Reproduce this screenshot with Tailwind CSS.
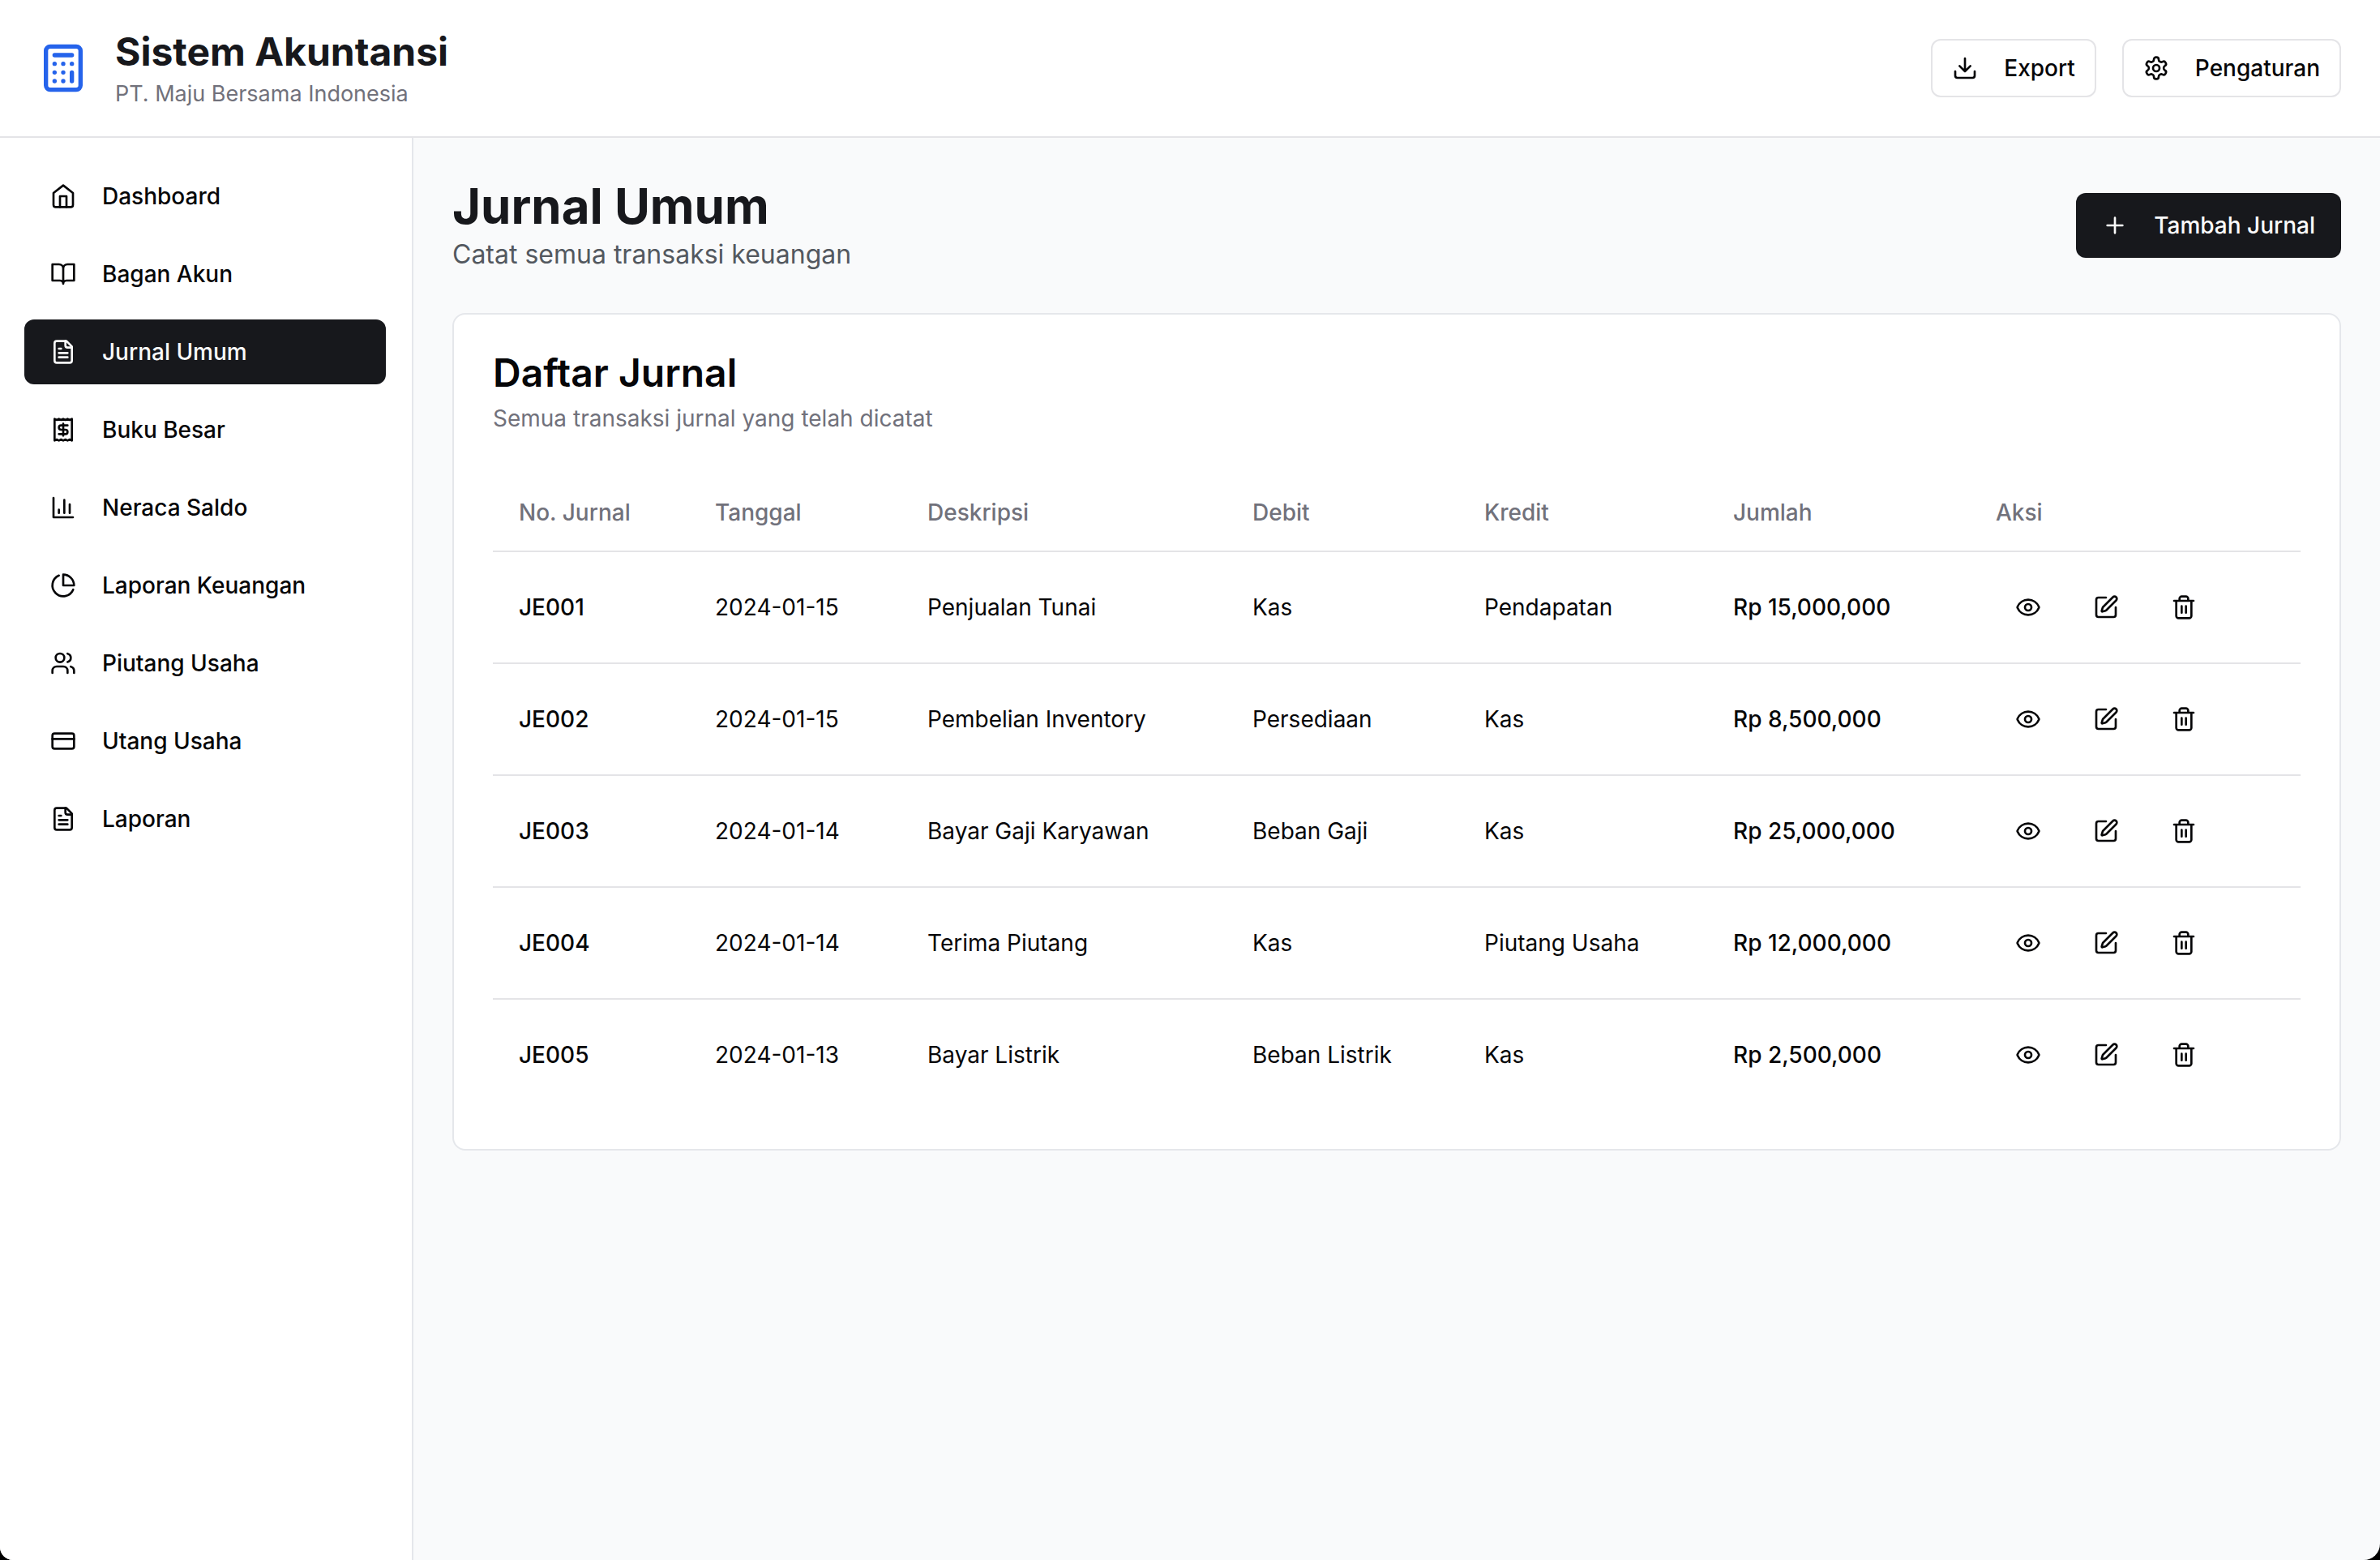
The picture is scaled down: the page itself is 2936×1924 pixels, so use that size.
<!DOCTYPE html>
<html lang="id">
<head>
    <meta charset="UTF-8">
    <meta name="viewport" content="width=device-width, initial-scale=1.0">
    <title>Jurnal Umum - Sistem Akuntansi</title>
    <script src="https://cdn.jsdelivr.net/npm/@tailwindcss/browser@4"></script>
</head>
<body class="bg-black font-[Inter,sans-serif] text-[28px] leading-10 text-[#060608]">
    <!-- Icons -->
    <svg class="hidden">
        <symbol id="calculator" viewBox="0 0 24 24"><rect width="16" height="20" x="4" y="2" rx="2"/><path d="M8 6h8M16 14v4M16 10h.01M12 10h.01M8 10h.01M12 14h.01M8 14h.01M12 18h.01M8 18h.01"/></symbol>
        <symbol id="download" viewBox="0 0 24 24"><path d="M21 15v4a2 2 0 0 1-2 2H5a2 2 0 0 1-2-2v-4M7 10l5 5 5-5M12 15V3"/></symbol>
        <symbol id="settings" viewBox="0 0 24 24"><path d="M12.22 2h-.44a2 2 0 0 0-2 2v.18a2 2 0 0 1-1 1.73l-.43.25a2 2 0 0 1-2 0l-.15-.08a2 2 0 0 0-2.73.73l-.22.38a2 2 0 0 0 .73 2.73l.15.1a2 2 0 0 1 1 1.72v.51a2 2 0 0 1-1 1.74l-.15.09a2 2 0 0 0-.73 2.73l.22.38a2 2 0 0 0 2.73.73l.15-.08a2 2 0 0 1 2 0l.43.25a2 2 0 0 1 1 1.73V20a2 2 0 0 0 2 2h.44a2 2 0 0 0 2-2v-.18a2 2 0 0 1 1-1.73l.43-.25a2 2 0 0 1 2 0l.15.08a2 2 0 0 0 2.73-.73l.22-.39a2 2 0 0 0-.73-2.73l-.15-.08a2 2 0 0 1-1-1.74v-.5a2 2 0 0 1 1-1.74l.15-.09a2 2 0 0 0 .73-2.73l-.22-.38a2 2 0 0 0-2.73-.73l-.15.08a2 2 0 0 1-2 0l-.43-.25a2 2 0 0 1-1-1.73V4a2 2 0 0 0-2-2z"/><circle cx="12" cy="12" r="3"/></symbol>
        <symbol id="home" viewBox="0 0 24 24"><path d="m3 9 9-7 9 7v11a2 2 0 0 1-2 2H5a2 2 0 0 1-2-2z"/><path d="M9 22V12h6v10"/></symbol>
        <symbol id="book-open" viewBox="0 0 24 24"><path d="M2 3h6a4 4 0 0 1 4 4v14a3 3 0 0 0-3-3H2zM22 3h-6a4 4 0 0 0-4 4v14a3 3 0 0 1 3-3h7z"/></symbol>
        <symbol id="file-text" viewBox="0 0 24 24"><path d="M15 2H6a2 2 0 0 0-2 2v16a2 2 0 0 0 2 2h12a2 2 0 0 0 2-2V7Z"/><path d="M14 2v4a2 2 0 0 0 2 2h4M10 9H8M16 13H8M16 17H8"/></symbol>
        <symbol id="receipt" viewBox="0 0 24 24"><path d="M4 2v20l2-1 2 1 2-1 2 1 2-1 2 1 2-1 2 1V2l-2 1-2-1-2 1-2-1-2 1-2-1-2 1Z"/><path d="M16 8h-6a2 2 0 1 0 0 4h4a2 2 0 1 1 0 4H8M12 17.5v-11"/></symbol>
        <symbol id="bar-chart" viewBox="0 0 24 24"><path d="M3 3v18h18M18 17V9M13 17V5M8 17v-3"/></symbol>
        <symbol id="pie-chart" viewBox="0 0 24 24"><path d="M21.21 15.89A10 10 0 1 1 8 2.83"/><path d="M22 12A10 10 0 0 0 12 2v10z"/></symbol>
        <symbol id="users" viewBox="0 0 24 24"><path d="M16 21v-2a4 4 0 0 0-4-4H6a4 4 0 0 0-4 4v2"/><circle cx="9" cy="7" r="4"/><path d="M22 21v-2a4 4 0 0 0-3-3.87M16 3.13a4 4 0 0 1 0 7.75"/></symbol>
        <symbol id="credit-card" viewBox="0 0 24 24"><rect width="20" height="14" x="2" y="5" rx="2"/><path d="M2 10h20"/></symbol>
        <symbol id="plus" viewBox="0 0 24 24"><path d="M5 12h14M12 5v14"/></symbol>
        <symbol id="eye" viewBox="0 0 24 24"><path d="M2.062 12.348a1 1 0 0 1 0-.696 10.75 10.75 0 0 1 19.876 0 1 1 0 0 1 0 .696 10.75 10.75 0 0 1-19.876 0"/><circle cx="12" cy="12" r="3"/></symbol>
        <symbol id="edit" viewBox="0 0 24 24"><path d="M12 3H5a2 2 0 0 0-2 2v14a2 2 0 0 0 2 2h14a2 2 0 0 0 2-2v-7"/><path d="M18.375 2.625a1 1 0 0 1 3 3l-9.013 9.014a2 2 0 0 1-.853.505l-2.873.84a.5.5 0 0 1-.62-.62l.84-2.873a2 2 0 0 1 .506-.852z"/></symbol>
        <symbol id="trash" viewBox="0 0 24 24"><path d="M3 6h18M19 6v14c0 1-1 2-2 2H7c-1 0-2-1-2-2V6M8 6V4c0-1 1-2 2-2h4c1 0 2 1 2 2v2M10 11v6M14 11v6"/></symbol>
    </svg>

    <div class="flex min-h-screen flex-col overflow-hidden rounded-bl-[16px] rounded-br-[20px] bg-gray-50">
        <!-- Header -->
        <header class="flex items-center justify-between border-b-2 border-zinc-200 bg-white py-8 pr-12 pl-[46px]">
            <div class="flex items-center gap-8">
                <svg class="size-16 fill-none stroke-[#2563eb] stroke-2 [stroke-linecap:round] [stroke-linejoin:round]"><use href="#calculator"/></svg>
                <div>
                    <h1 class="text-[48px] leading-16 font-bold text-[#17181c]">Sistem Akuntansi</h1>
                    <p class="text-[27px] text-zinc-500">PT. Maju Bersama Indonesia</p>
                </div>
            </div>
            <div class="flex items-center gap-8 font-medium">
                <button class="flex h-18 items-center gap-8 rounded-xl border-2 border-zinc-200 bg-white px-6">
                    <svg class="size-8 fill-none stroke-current stroke-2 [stroke-linecap:round] [stroke-linejoin:round]"><use href="#download"/></svg>
                    Export
                </button>
                <button class="flex h-18 items-center gap-8 rounded-xl border-2 border-zinc-200 bg-white px-6">
                    <svg class="size-8 fill-none stroke-current stroke-2 [stroke-linecap:round] [stroke-linejoin:round]"><use href="#settings"/></svg>
                    Pengaturan
                </button>
            </div>
        </header>

        <div class="flex grow">
            <!-- Sidebar -->
            <aside class="w-[510px] shrink-0 border-r-2 border-gray-200 bg-white py-8 pr-8 pl-[30px]">
                <nav class="flex flex-col gap-4 font-medium">
                    <a href="#" class="flex h-20 items-center gap-8 rounded-xl px-8">
                        <svg class="size-8 fill-none stroke-current stroke-2 [stroke-linecap:round] [stroke-linejoin:round]"><use href="#home"/></svg>
                        Dashboard
                    </a>
                    <a href="#" class="flex h-20 items-center gap-8 rounded-xl px-8">
                        <svg class="size-8 fill-none stroke-current stroke-2 [stroke-linecap:round] [stroke-linejoin:round]"><use href="#book-open"/></svg>
                        Bagan Akun
                    </a>
                    <a href="#" aria-current="page" class="flex h-20 items-center gap-8 rounded-xl bg-[#17181c] px-8 text-zinc-50">
                        <svg class="size-8 fill-none stroke-current stroke-2 [stroke-linecap:round] [stroke-linejoin:round]"><use href="#file-text"/></svg>
                        Jurnal Umum
                    </a>
                    <a href="#" class="flex h-20 items-center gap-8 rounded-xl px-8">
                        <svg class="size-8 fill-none stroke-current stroke-2 [stroke-linecap:round] [stroke-linejoin:round]"><use href="#receipt"/></svg>
                        Buku Besar
                    </a>
                    <a href="#" class="flex h-20 items-center gap-8 rounded-xl px-8">
                        <svg class="size-8 fill-none stroke-current stroke-2 [stroke-linecap:round] [stroke-linejoin:round]"><use href="#bar-chart"/></svg>
                        Neraca Saldo
                    </a>
                    <a href="#" class="flex h-20 items-center gap-8 rounded-xl px-8">
                        <svg class="size-8 fill-none stroke-current stroke-2 [stroke-linecap:round] [stroke-linejoin:round]"><use href="#pie-chart"/></svg>
                        Laporan Keuangan
                    </a>
                    <a href="#" class="flex h-20 items-center gap-8 rounded-xl px-8">
                        <svg class="size-8 fill-none stroke-current stroke-2 [stroke-linecap:round] [stroke-linejoin:round]"><use href="#users"/></svg>
                        Piutang Usaha
                    </a>
                    <a href="#" class="flex h-20 items-center gap-8 rounded-xl px-8">
                        <svg class="size-8 fill-none stroke-current stroke-2 [stroke-linecap:round] [stroke-linejoin:round]"><use href="#credit-card"/></svg>
                        Utang Usaha
                    </a>
                    <a href="#" class="flex h-20 items-center gap-8 rounded-xl px-8">
                        <svg class="size-8 fill-none stroke-current stroke-2 [stroke-linecap:round] [stroke-linejoin:round]"><use href="#file-text"/></svg>
                        Laporan
                    </a>
                </nav>
            </aside>

            <!-- Main Content -->
            <main class="flex min-w-0 grow flex-col gap-12 p-12">
                <div class="flex items-center justify-between">
                    <div>
                        <h2 class="text-[60px] leading-18 font-bold text-[#17181c]">Jurnal Umum</h2>
                        <p class="text-[32px] leading-12 text-[#53585f]">Catat semua transaksi keuangan</p>
                    </div>
                    <button class="flex h-20 items-center gap-8 rounded-xl bg-[#17181c] px-8 font-medium text-zinc-50">
                        <svg class="size-8 fill-none stroke-current stroke-2 [stroke-linecap:round] [stroke-linejoin:round]"><use href="#plus"/></svg>
                        Tambah Jurnal
                    </button>
                </div>

                <section class="rounded-2xl border-2 border-gray-200 bg-white">
                    <div class="flex flex-col gap-3 p-12">
                        <h3 class="text-[48px] leading-12 font-semibold">Daftar Jurnal</h3>
                        <p class="text-zinc-500">Semua transaksi jurnal yang telah dicatat</p>
                    </div>
                    <div class="px-12 pb-12">
                        <table class="w-full table-fixed text-left">
                            <thead class="text-zinc-500">
                                <tr class="border-b-2 border-zinc-200">
                                    <th class="h-24 w-[242px] px-8 font-medium">No. Jurnal</th>
                                    <th class="w-[262px] px-8 font-medium">Tanggal</th>
                                    <th class="w-[401px] px-8 font-medium">Deskripsi</th>
                                    <th class="w-[286px] px-8 font-medium">Debit</th>
                                    <th class="w-[307px] px-8 font-medium">Kredit</th>
                                    <th class="w-[324px] px-8 font-medium">Jumlah</th>
                                    <th class="w-[408px] px-8 font-medium">Aksi</th>
                                </tr>
                            </thead>
                            <tbody id="journal-rows"></tbody>
                        </table>
                    </div>
                </section>
            </main>
        </div>
    </div>

    <script>
        const journals = [
            ['JE001', '2024-01-15', 'Penjualan Tunai', 'Kas', 'Pendapatan', 15000000],
            ['JE002', '2024-01-15', 'Pembelian Inventory', 'Persediaan', 'Kas', 8500000],
            ['JE003', '2024-01-14', 'Bayar Gaji Karyawan', 'Beban Gaji', 'Kas', 25000000],
            ['JE004', '2024-01-14', 'Terima Piutang', 'Kas', 'Piutang Usaha', 12000000],
            ['JE005', '2024-01-13', 'Bayar Listrik', 'Beban Listrik', 'Kas', 2500000],
        ];

        const actions = [['eye', 'Lihat'], ['edit', 'Ubah'], ['trash', 'Hapus']];

        document.getElementById('journal-rows').innerHTML = journals.map(([no, date, desc, debit, credit, amount]) => `
            <tr class="border-b-2 border-zinc-200 last:border-b-0">
                <td class="p-8 font-medium">${no}</td>
                <td class="p-8">${date}</td>
                <td class="p-8">${desc}</td>
                <td class="p-8">${debit}</td>
                <td class="p-8">${credit}</td>
                <td class="p-8 font-medium">Rp ${amount.toLocaleString('en-US')}</td>
                <td class="p-8">
                    <div class="flex gap-4">
                        ${actions.map(([icon, label]) => `
                            <button aria-label="${label} ${no}" class="flex h-18 items-center px-6">
                                <svg class="size-8 fill-none stroke-current stroke-2 [stroke-linecap:round] [stroke-linejoin:round]"><use href="#${icon}"/></svg>
                            </button>`).join('')}
                    </div>
                </td>
            </tr>`).join('');
    </script>
</body>
</html>
